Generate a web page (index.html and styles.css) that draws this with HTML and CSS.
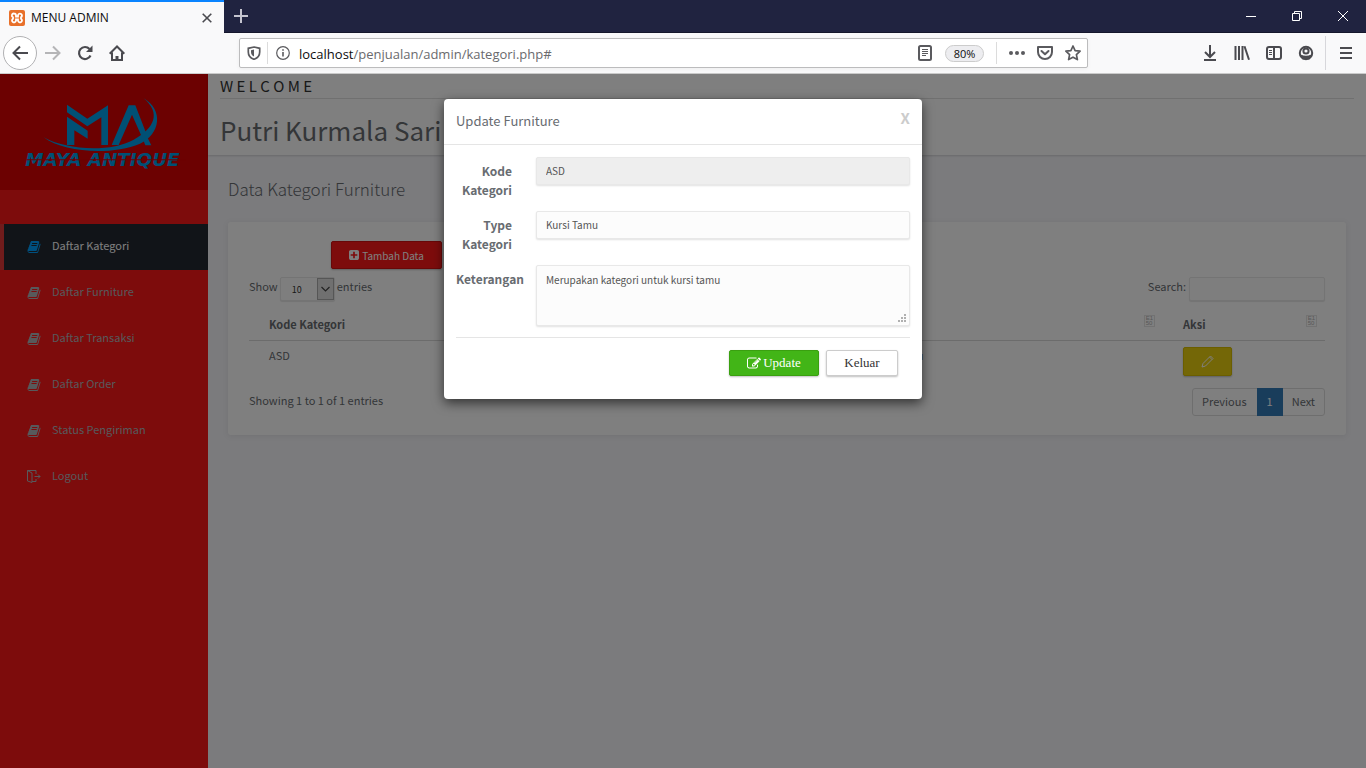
FILE: index.html
```html
<!DOCTYPE html>
<html lang="id">
<head>
<meta charset="utf-8">
<title>MENU ADMIN</title>
<link rel="stylesheet" href="styles.css">
</head>
<body>
<svg class="defs" aria-hidden="true">
  <symbol id="book" viewBox="0 0 1664 1792"><path d="M1639 478q40 57 18 129l-275 906q-19 64-76.5 107.5t-122.5 43.5h-923q-77 0-148.5-53.5t-99.5-131.5q-24-67-2-127 0-4 3-27t4-37q1-8-3-21.5t-3-19.5q2-11 8-21t16.5-23.5 16.5-23.5q23-38 45-91.5t30-91.5q3-10 .5-30t-.5-28q3-11 17-28t17-23q21-36 42-92t25-90q1-9-2.5-32t.5-28q4-13 22-30.5t22-22.5q19-26 42.5-84.5t27.5-96.5q1-8-3-25.5t-2-26.5q2-8 9-18t18-23 17-21q8-12 16.5-30.5t15-35 16-36 19.5-32 26.5-23.5 36-11.5 47.5 5.5l-1 3q38-9 51-9h761q74 0 114 56t18 130l-274 906q-36 119-71.5 153.5t-128.5 34.5h-869q-27 0-38 15-11 16-1 43 24 70 144 70h923q29 0 56-15.5t35-41.5l300-987q7-22 5-57 38 15 59 43zm-1064 2q-4 13 2 22.5t20 9.5h608q13 0 25.5-9.5t16.5-22.5l21-64q4-13-2-22.5t-20-9.5h-608q-13 0-25.5 9.5t-16.5 22.5zm-83 256q-4 13 2 22.5t20 9.5h608q13 0 25.5-9.5t16.5-22.5l21-64q4-13-2-22.5t-20-9.5h-608q-13 0-25.5 9.5t-16.5 22.5z"/></symbol>
</svg>

<div class="browser">
  <div class="tabbar">
    <div class="tab">
      <svg class="favicon" width="16" height="16" viewBox="0 0 16 16"><rect width="16" height="16" rx="2" fill="#e8702a"/><path d="M5 3.500a2 2 0 0 0-1 3.800v1.400a2 2 0 1 0 3 2V9.500h2v1.200a2 2 0 1 0 3-2V7.300a2 2 0 1 0-3-2v1.200H7V5.300A2 2 0 0 0 5 3.500z" fill="none" stroke="#fff" stroke-width="1.800"/></svg>
      <span class="tab-title">MENU ADMIN</span>
      <button class="bare" aria-label="Close tab"><svg width="10" height="10" viewBox="0 0 10 10"><path d="M.7.700l8.600 8.600M9.300.700L.7 9.300" stroke="#4a4a4f" stroke-width="1.600"/></svg></button>
    </div>
    <button class="bare newtab" aria-label="New tab"><svg width="14" height="14" viewBox="0 0 14 14"><path d="M7 0v14M0 7h14" stroke="#c4c4cf" stroke-width="2"/></svg></button>
    <div class="window-buttons">
      <button class="bare" aria-label="Minimize"><svg width="10" height="10" viewBox="0 0 10 10"><path d="M0 5.500h10" stroke="#fff"/></svg></button>
      <button class="bare" aria-label="Restore"><svg width="10" height="10" viewBox="0 0 10 10" fill="none" stroke="#fff"><path d="M.5 2.500h7v7h-7zM2.500 2V.5h7v7H8"/></svg></button>
      <button class="bare" aria-label="Close"><svg width="10" height="10" viewBox="0 0 10 10"><path d="M0 0l10 10M10 0L0 10" stroke="#fff"/></svg></button>
    </div>
  </div>
  <div class="toolbar">
    <div class="nav-buttons">
      <button class="bare back" aria-label="Back"><svg width="16" height="16" viewBox="0 0 16 16" fill="none" stroke="#4a4a4f" stroke-width="2"><path d="M16 8H1.500M8 1.500L1.500 8 8 14.500"/></svg></button>
      <button class="bare" aria-label="Forward"><svg width="16" height="16" viewBox="0 0 16 16" fill="none" stroke="#b5b5b7" stroke-width="2"><path d="M0 8h14.500M8 1.500L14.500 8 8 14.500"/></svg></button>
      <button class="bare" aria-label="Reload"><svg width="16" height="16" viewBox="0 0 16 16"><path d="M13.500 10.500A6 6 0 1 1 12.500 4" fill="none" stroke="#4a4a4f" stroke-width="2.200"/><path d="M15.500.500V7H9z" fill="#4a4a4f"/></svg></button>
      <button class="bare" aria-label="Home"><svg width="16" height="16" viewBox="0 0 16 16" fill="none" stroke="#4a4a4f" stroke-width="2"><path d="M.7 8.700L8 1.500l7.300 7.200M3 7.500V15h10V7.500"/><path d="M8 15v-4" stroke-width="3"/></svg></button>
    </div>
    <div class="urlbar">
      <svg width="14" height="14" viewBox="0 0 14 14"><path d="M7 1L12.700 2.300V6c0 3.500-2 6-5.700 7.300C3.300 12 1.300 9.500 1.300 6V2.300z" fill="none" stroke="#5a5a5e" stroke-width="1.700"/><path d="M7 3.500v7C5 9.500 4 8 4 6V4.200z" fill="#5a5a5e"/></svg>
      <svg class="info" width="14" height="14" viewBox="0 0 14 14"><circle cx="7" cy="7" r="6.300" fill="none" stroke="#5a5a5e" stroke-width="1.200"/><path d="M7 6v4.500M7 3.200v1.600" stroke="#5a5a5e" stroke-width="1.600"/></svg>
      <span class="url">localhost<span class="path">/penjualan/admin/kategori.php#</span></span>
      <svg width="14" height="16" viewBox="0 0 14 16" fill="none" stroke="#5a5a5e"><rect x="1" y="1" width="12" height="14" rx="1.500" stroke-width="2"/><path d="M4 4.500h6M4 6.500h6M4 8.500h6M4 10.500h4"/></svg>
      <button class="zoom">80%</button>
      <div class="page-actions">
        <svg width="16" height="16" viewBox="0 0 16 16" fill="#5a5a5e"><circle cx="2" cy="8" r="2"/><circle cx="8" cy="8" r="2"/><circle cx="14" cy="8" r="2"/></svg>
        <svg width="16" height="16" viewBox="0 0 16 16" fill="none" stroke="#5a5a5e" stroke-width="2" stroke-linejoin="round"><path d="M1 2h14v5a7 7 0 0 1-14 0z"/><path d="M4.500 6L8 9.300 11.500 6" stroke-linecap="round"/></svg>
        <svg width="16" height="16" viewBox="0 0 16 16" fill="none" stroke="#5a5a5e" stroke-width="1.700" stroke-linejoin="round"><path d="M8 1l2.100 4.600 5 .6-3.700 3.400 1 5L8 12.200l-4.400 2.400 1-5L.9 6.200l5-.6z"/></svg>
      </div>
    </div>
    <div class="tools">
      <svg width="16" height="16" viewBox="0 0 16 16" fill="none" stroke="#4a4a4f" stroke-width="2"><path d="M8 0v11.500M3 7l5 5 5-5M2 15h12"/></svg>
      <svg width="16" height="16" viewBox="0 0 16 16" fill="none" stroke="#4a4a4f" stroke-width="2"><path d="M1.500 1v14M5 1v14M8.500 1v14M10.500 1.300L15 14.700"/></svg>
      <svg width="16" height="16" viewBox="0 0 16 16" fill="none" stroke="#4a4a4f" stroke-width="2"><rect x="1" y="2" width="14" height="12" rx="2"/><path d="M8 2v12"/><path d="M3 5.500h3M3 7.500h3M3 9.500h3" stroke-width="1"/></svg>
      <svg width="16" height="16" viewBox="0 0 16 16" fill="none" stroke="#4a4a4f" stroke-width="2"><circle cx="8" cy="8" r="6.200"/><circle cx="8" cy="6" r="2.600"/><path d="M3 10.500c2 1.500 8 1.500 10 0L11 13.500H5z" fill="#4a4a4f"/></svg>
    </div>
    <button class="bare menu-button" aria-label="Menu"><svg width="12" height="12" viewBox="0 0 12 12"><path d="M0 1h12M0 6h12M0 11h12" stroke="#4a4a4f" stroke-width="2"/></svg></button>
  </div>

  <div class="viewport">
    <aside class="sidebar">
      <div class="brand">
        <svg class="logo" viewBox="0 0 624 348" fill="#00a0ea">
          <path d="M201 92l61 42 62-40v119h-20v-83l-42 27-61-42z"/>
          <path d="M201 128l62 42v24l-40-25v44h-22z"/>
          <path d="M335 213l51-119h20l32 82-12 14-30-68-40 91z"/>
          <path d="M430 199l12-9 12 24h-18z"/>
          <path d="M131 190c68 38 200 46 270 7 62-35 84-79 29-125 62 36 51 108-10 137-85 36-229 27-289-19z"/>
          <text x="76" y="275" class="logo-text">MAYA ANTIQUE</text>
          <path d="M80 256h476v3H80z" fill="#d80202"/>
        </svg>
      </div>
      <nav class="menu">
        <a class="active" href="#"><svg><use href="#book"/></svg>Daftar Kategori</a>
        <a href="#"><svg><use href="#book"/></svg>Daftar Furniture</a>
        <a href="#"><svg><use href="#book"/></svg>Daftar Transaksi</a>
        <a href="#"><svg><use href="#book"/></svg>Daftar Order</a>
        <a href="#"><svg><use href="#book"/></svg>Status Pengiriman</a>
        <a href="#"><svg viewBox="0 0 14 14" fill="none" stroke="currentColor"><path d="M5 12.500L.5 11V.5H9V4M.5.500L5 3v9.500M5 11.500h4V9M7.500 6.500H13M11 4.500l2 2-2 2"/></svg>Logout</a>
      </nav>
    </aside>

    <main class="main">
      <header class="page-head">
        <p class="welcome">W E L C O M E</p>
        <h1>Putri Kurmala Sari</h1>
      </header>
      <div class="content">
        <h2>Data Kategori Furniture</h2>
        <section class="card">
          <button class="btn add"><svg width="10" height="10" viewBox="128 128 1536 1536" fill="currentColor"><path d="M1408 960v-128q0-26-19-45t-45-19h-320v-320q0-26-19-45t-45-19h-128q-26 0-45 19t-19 45v320h-320q-26 0-45 19t-19 45v128q0 26 19 45t45 19h320v320q0 26 19 45t45 19h128q26 0 45-19t19-45v-320h320q26 0 45-19t19-45zm256-544v960q0 119-84.500 203.500t-203.500 84.500h-960q-119 0-203.500-84.500t-84.500-203.500v-960q0-119 84.500-203.500t203.500-84.500h960q119 0 203.500 84.500t84.500 203.500z"/></svg>Tambah Data</button>
          <div class="filters">
            <label class="length">Show
              <span class="select"><select><option>10</option><option>25</option></select><svg width="17" height="22" viewBox="0 0 17 22"><rect x=".5" y=".5" width="16" height="21" fill="#e1e1e1" stroke="#adadad"/><path d="M4.500 9l4 4 4-4" fill="none" stroke="#444" stroke-width="1.200"/></svg></span>
              entries</label>
            <label class="search">Search:<input type="search"></label>
          </div>
          <table>
            <colgroup><col class="c-code"><col class="c-type"><col class="c-note"><col class="c-act"></colgroup>
            <thead><tr><th>Kode Kategori</th><th>Type Kategori</th><th>Keterangan<span class="sort" aria-hidden="true">E1<br>50</span></th><th>Aksi<span class="sort" aria-hidden="true">E1<br>50</span></th></tr></thead>
            <tbody><tr><td>ASD</td><td>Kursi Tamu</td><td>Merupakan kategori untuk kursi tamu</td><td><button class="btn edit" aria-label="Edit"><svg width="13" height="13" viewBox="0 0 13 13" fill="none" stroke="currentColor"><path d="M1 12l1-3.500L9.500 1l2.500 2.500L4.500 11zM8.500 2L11 4.500"/></svg></button></td></tr></tbody>
          </table>
          <div class="table-foot">
            <span>Showing 1 to 1 of 1 entries</span>
            <nav class="pages"><a href="#">Previous</a><a class="current" href="#">1</a><a href="#">Next</a></nav>
          </div>
        </section>
      </div>
    </main>

    <div class="overlay">
      <form class="modal" role="dialog" aria-labelledby="modal-title">
        <div class="modal-head">
          <h3 id="modal-title">Update Furniture</h3>
          <button type="button" class="bare close">X</button>
        </div>
        <div class="modal-body">
          <div class="fields">
            <label for="kode">Kode Kategori</label><input id="kode" value="ASD" readonly>
            <label for="type">Type Kategori</label><input id="type" value="Kursi Tamu">
            <label for="ket">Keterangan</label>
            <div class="area"><textarea id="ket">Merupakan kategori untuk kursi tamu</textarea><svg width="8" height="8" viewBox="0 0 8 8" fill="#b0b0b0"><path d="M6 0h2v2H6zM3 3h2v2H3zM6 3h2v2H6zM0 6h2v2H0zM3 6h2v2H3zM6 6h2v2H6z"/></svg></div>
          </div>
          <div class="actions">
            <button type="button" class="btn update"><svg width="14" height="13" viewBox="0 100 1792 1600" fill="currentColor"><path d="M888 1184l116-116-152-152-116 116v56h96v96h56zm440-720q-16-16-33 1l-350 350q-17 17-1 33t33-1l350-350q17-17 1-33zm80 594v190q0 119-84.500 203.500t-203.500 84.500h-832q-119 0-203.500-84.500t-84.500-203.500v-832q0-119 84.500-203.500t203.500-84.500h832q63 0 117 25 15 7 18 23 3 17-9 29l-49 49q-14 14-32 8-23-6-45-6h-832q-66 0-113 47t-47 113v832q0 66 47 113t113 47h832q66 0 113-47t47-113v-126q0-13 9-22l64-64q15-15 35-7t20 29zm-96-738l288 288-672 672h-288v-288zm444 132l-92 92-288-288 92-92q28-28 68-28t68 28l152 152q28 28 28 68t-28 68z"/></svg>Update</button>
            <button type="button" class="btn leave">Keluar</button>
          </div>
        </div>
      </form>
    </div>
  </div>
</div>
</body>
</html>
```
FILE: styles.css
```css
* { box-sizing: border-box; }

body {
  margin: 0;
  font: 11px/19px "Noto Sans CJK SC", "Noto Sans", sans-serif;
  color: #686c71;
}

h1, h2, h3, p { margin: 0; }
svg { display: block; flex: none; }
input, select, textarea, button { font: inherit; color: inherit; }
button { display: flex; align-items: center; justify-content: center; }
a { color: inherit; text-decoration: none; }

.defs { position: absolute; width: 0; height: 0; }
.bare { padding: 0; border: 0; background: none; }

.browser { display: flex; flex-direction: column; min-height: 100vh; }

/* Browser chrome */
.tabbar { display: flex; height: 33px; background: #202340; border-bottom: 1px solid #15172c; }
.tab {
  display: flex;
  align-items: center;
  gap: 6px;
  width: 224px;
  height: 33px;
  padding: 0 12px 0 9px;
  background: #f9f9fa;
  border-top: 2px solid #0a84ff;
  color: #0c0c0d;
  font: 12px/16px "Open Sans", sans-serif;
}
.tab-title { flex: 1; }
.newtab { margin-left: 10px; }
.window-buttons { display: flex; margin-left: auto; }
.window-buttons button { width: 46px; }

.toolbar {
  display: flex;
  align-items: center;
  height: 41px;
  background: #f9f9fa;
  border-bottom: 1px solid #ccc;
}
.nav-buttons { display: flex; align-items: center; gap: 16px; width: 239px; padding-left: 3px; }
.back { width: 34px; height: 34px; margin-right: -8px; border: 1px solid #b1b1b3; border-radius: 50%; background: #fff; }
.urlbar {
  display: flex;
  flex: 1;
  align-items: center;
  height: 30px;
  padding: 0 6px 0 7px;
  background: #fff;
  border: 1px solid #bcbcbd;
  border-radius: 2px;
  box-shadow: 0 1px 4px rgba(0, 0, 0, .05);
}
.info { box-sizing: content-box; margin-left: 6px; padding: 4px 0 4px 8px; border-left: 1px solid #dcdcdc; }
.url { flex: 1; margin-left: 9px; padding-top: 2px; color: #0c0c0d; font: 13px/20px "Open Sans", sans-serif; }
.path { color: #6a6a6d; }
.zoom {
  width: 39px;
  height: 17px;
  margin: 0 12px 0 13px;
  padding: 0;
  border: 1px solid #ccc;
  border-radius: 9px;
  background: #ededf0;
  color: #0c0c0d;
  font: 11px/15px "Open Sans", sans-serif;
}
.page-actions { display: flex; gap: 12px; padding: 3px 0 3px 12px; border-left: 1px solid #dcdcdc; }
.tools { display: flex; gap: 16px; padding: 0 11px 0 114px; }
.menu-button { width: 41px; height: 34px; border-left: 1px solid #d7d7db; }

/* Page */
.viewport { position: relative; display: flex; flex: 1; }
.sidebar { width: 208px; background: #fb1819; }
.brand { height: 116px; background: #d80202; }
.logo { width: 100%; height: 100%; }
.logo-text { font: italic bold 55px "DejaVu Sans", sans-serif; }
.menu { display: flex; flex-direction: column; padding-top: 34px; color: #aeb2b7; }
.menu a {
  display: flex;
  align-items: center;
  gap: 11px;
  height: 46px;
  padding: 0 0 4px 23px;
  border-left: 4px solid transparent;
}
.menu svg { width: 14px; height: 14px; margin-top: 4px; fill: currentColor; }
.menu a:last-child svg { fill: none; }
.menu .active { background: #222930; border-color: #e03838; color: #fff; }
.menu .active svg { color: #00a0ff; }

.main { flex: 1; background: #f6f6fa; }
.page-head {
  height: 81px;
  padding: 0 12px;
  background: #fff;
  box-shadow: 0 1px 2px rgba(0, 0, 0, .15);
}
.welcome { height: 25px; border-bottom: 1px solid #e0e0e0; color: #323232; font-size: 15px; line-height: 24px; }
h1 { font-size: 26px; font-weight: 400; line-height: 61px; }
.content { padding: 20px; }
h2 { font-size: 17px; font-weight: 300; line-height: 27px; }
.card {
  margin-top: 20px;
  padding: 19px 21px;
  background: #fff;
  border-radius: 3px;
  box-shadow: 0 1px 6px rgba(0, 0, 0, .08);
}
.btn { border: 1px solid; border-radius: 2px; box-shadow: 0 1px 2px rgba(0, 0, 0, .25); }
.add { gap: 3px; width: 111px; height: 28px; margin-left: 82px; border-color: #d01010; background: #fb1819; color: #fff; font-size: 10px; }
.filters { display: flex; justify-content: space-between; margin-top: 8px; }
.filters label { display: flex; align-items: flex-start; gap: 3px; }
.filters .length { gap: 2px; }
.select { position: relative; }
.select svg { position: absolute; top: 1px; right: 1px; pointer-events: none; }
select, .search input { height: 24px; border: 1px solid #e8e8e8; border-radius: 2px; background: #fdfdfd; box-shadow: 0 1px 1px rgba(0, 0, 0, .1); }
select { display: block; width: 55px; padding: 0 11px; appearance: none; font-size: 9px; color: #333; }
.search input { width: 136px; }

table { width: 100%; margin-top: 8px; border-collapse: collapse; table-layout: fixed; }
.c-code { width: 22%; }
.c-type { width: 21%; }
.c-act { width: 162px; }
th, td { padding: 6px 20px; text-align: left; vertical-align: top; }
th { height: 31px; border-bottom: 1px solid #d8d8d8; line-height: 19px; }
td { padding-bottom: 0; line-height: 17px; }
.sort { float: right; margin-right: -12px; padding: 0 1px; border: 1px solid #e4e4e4; color: #b0b0b0; font: 6px/5px "Liberation Sans", sans-serif; }
.edit { width: 49px; height: 29px; border-color: #d6bd00; background: #e9cf0e; color: #fff; }

.table-foot { display: flex; justify-content: space-between; margin-top: 12px; }
.table-foot > span { padding-top: 3px; }
.pages { display: flex; border: 1px solid #ddd; border-radius: 3px; }
.pages a { padding: 3px 9px 5px; line-height: 18px; }
.pages a:first-child { padding-right: 10px; }
.pages .current { margin: -1px 0; padding: 4px 10px 6px; background: #337ab7; color: #fff; }

/* Dialog */
.overlay {
  position: absolute;
  inset: 0;
  display: flex;
  align-items: flex-start;
  justify-content: center;
  padding-top: 25px;
  background: rgba(0, 0, 0, .5);
}
.modal { width: 478px; background: #fff; border-radius: 4px; box-shadow: 0 4px 12px rgba(0, 0, 0, .6); }
.modal-head { display: flex; justify-content: space-between; height: 46px; padding: 9px 12px; border-bottom: 1px solid #e5e5e5; }
h3 { font-size: 13px; font-weight: 400; line-height: 25px; }
.close { height: 20px; color: #ccc; font-size: 15px; font-weight: 700; line-height: 20px; }
.modal-body { padding: 12px 12px 23px; }
.fields { display: grid; grid-template-columns: 56px 1fr; gap: 11px 24px; align-items: start; }
.fields label { padding: 4px 0 1px; text-align: right; font-weight: 700; font-size: 12px; }
.fields input, .fields textarea {
  display: block;
  width: 100%;
  height: 28px;
  padding: 0 9px 2px;
  border: 1px solid #e8e8e8;
  border-radius: 2px;
  background: #fcfcfc;
  box-shadow: 0 1px 2px rgba(0, 0, 0, .12);
  color: #555;
  font-size: 10px;
}
.fields input[readonly] { background: #eee; }
.fields textarea { height: 61px; padding: 4px 9px; resize: none; }
.area { position: relative; }
.area svg { position: absolute; right: 4px; bottom: 4px; }
.actions {
  display: flex;
  justify-content: flex-end;
  gap: 7px;
  margin-top: 11px;
  padding: 12px 12px 0 0;
  border-top: 1px solid #e5e5e5;
  font: 13px/18px "Liberation Serif", serif;
}
.actions .btn { height: 26px; }
.update { gap: 2px; width: 90px; border-color: #3aa010; background: #42b517; color: #fff; }
.leave { width: 72px; border-color: #ccc; background: #fff; color: #333; }
```
